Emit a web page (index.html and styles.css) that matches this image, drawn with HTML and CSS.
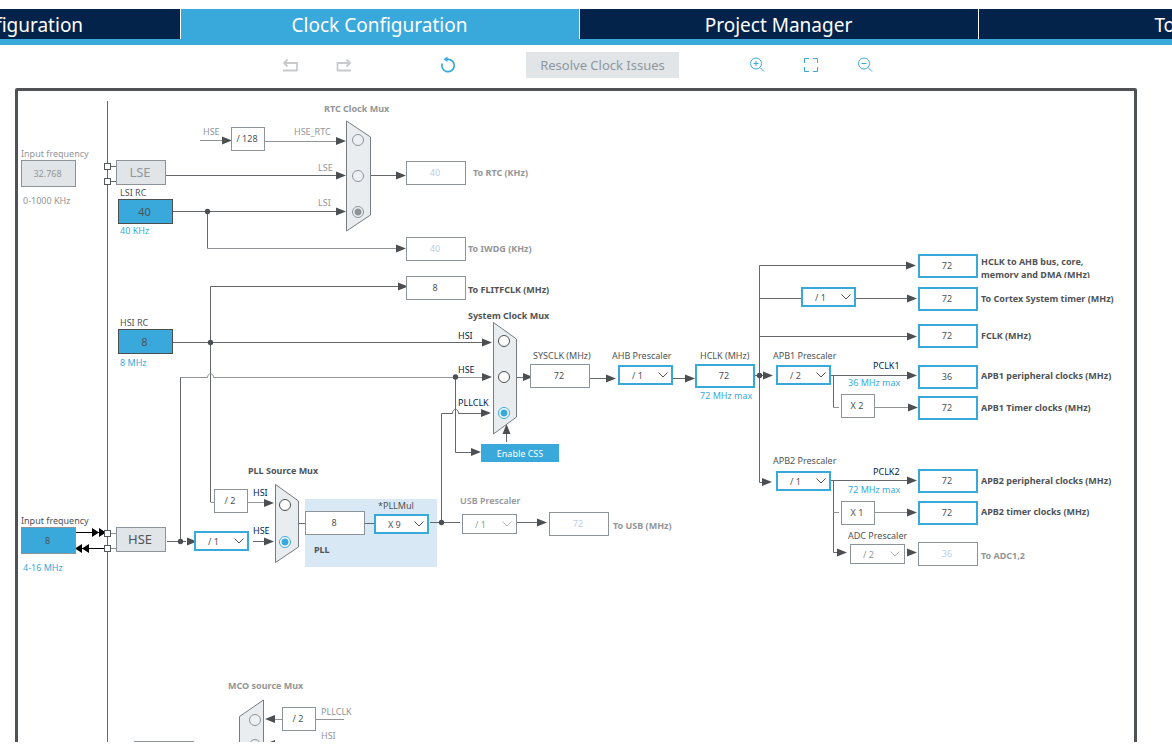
FILE: index.html
```html
<!DOCTYPE html>
<html lang="en">
<head>
<meta charset="utf-8">
<title>Clock Configuration</title>
<link rel="stylesheet" href="styles.css">
</head>
<body>
<nav class="tabs">
  <a class="tab" href="#pinout">Pinout &amp; Configuration</a>
  <a class="tab tab-active" href="#clock">Clock Configuration</a>
  <a class="tab" href="#project">Project Manager</a>
  <a class="tab" href="#tools">Tools</a>
</nav>

<div class="toolbar">
  <div class="tools">
    <button class="tool" aria-label="Undo" disabled><svg viewBox="0 0 20 20"><path class="gray-icon" d="M3 15.500H17M17 16V8H5M7.500 4.500L4 8L7.500 11.500"/></svg></button>
    <button class="tool" aria-label="Redo" disabled><svg viewBox="0 0 20 20"><path class="gray-icon" d="M17 15.500H3M3.500 16V8H15M12.500 4.500L16 8L12.500 11.500"/></svg></button>
  </div>
  <button class="tool tool-reset" aria-label="Reset"><svg viewBox="0 0 20 20"><path class="blue-icon bold-icon" d="M4.200 8.500A6.200 6.200 0 1 0 10 4.300H8"/><path class="blue-fill" d="M5.500 4.300L9.500 1.500V7Z"/></svg></button>
  <button class="resolve" disabled>Resolve Clock Issues</button>
  <div class="tools">
    <button class="tool" aria-label="Zoom in"><svg viewBox="0 0 20 20"><circle class="blue-icon" cx="9" cy="8.500" r="5.500"/><path class="blue-icon" d="M13 12.500L17 16.500M6.500 8.500H11.500M9 6V11"/></svg></button>
    <button class="tool" aria-label="Fit"><svg viewBox="0 0 20 20"><path class="blue-icon" d="M3.500 8V3.500H8M12 3.500H16.500V8M16.500 12V16.500H12M8 16.500H3.500V12"/></svg></button>
    <button class="tool" aria-label="Zoom out"><svg viewBox="0 0 20 20"><circle class="blue-icon" cx="9" cy="8.500" r="5.500"/><path class="blue-icon" d="M13 12.500L17 16.500M6.500 8.500H11.500"/></svg></button>
  </div>
</div>

<main class="diagram">
  <svg class="wires" width="1172" height="680" aria-hidden="true">
    <defs>
      <path id="arrow" class="head" d="M0 0L-10 -4V4Z"/>
      <symbol id="chevron" viewBox="0 0 12 8"><path class="chevron-line" d="M1.500 1.500L6 6L10.500 1.500"/></symbol>
    </defs>
    <rect class="pll-area" x="305" y="419" width="132" height="68"/>

    <g class="wire">
      <path d="M107.500 21V680"/>
      <path d="M110 86.500H116M110 101.500H116"/>
      <path d="M166 95.500H337M370 95.500H397"/>
      <path d="M173 131.500H337M207.500 131.500V168.500"/>
      <path d="M210.500 422V206.500H398M173 262.500H483"/>
      <path d="M180.500 461V297M455.500 297V372.500H472"/>
      <path d="M441.500 442V333.500H452.500C452.500 328 458.500 328 458.500 333.500H483"/>
      <path d="M517 297.500H524M506.500 362V352M590 298.500H607M673 298.500H686M755 295.500H765"/>
      <path d="M759.500 185.500V402.500H763M759.500 185.500H907M759.500 218.500H801M856 218.500H908M759.500 256.500H908"/>
      <path d="M831 295.500H908M833.500 295.500V327.500M831 400.500H907M833.500 400.500V472.500H838"/>
      <path d="M167 461.500H186M253 461.500H265M299 443.500H305M365 443.500H374M430 442.500H460M517 442.500H538"/>
    </g>
    <g class="wire pale">
      <path d="M200 60.500H222M265 61.500H337M207.500 168.500H397"/>
      <path d="M180.500 297.500H207.500C207.500 292.500 213.500 292.500 213.500 297.500H483"/>
      <path d="M210.500 422.500H214M248 422.500H265M833.500 327.500H839M875 327.500H908"/>
      <path d="M833.500 432.500H839M875 432.500H907M274 639.500H282M316 639.500H344"/>
      <path d="M110 453.500H116M110 468.500H116"/>
    </g>
    <g>
      <use href="#arrow" x="232" y="60.500"/><use href="#arrow" x="346" y="61"/>
      <use href="#arrow" x="346" y="95.500"/><use href="#arrow" x="346" y="131.500"/>
      <use href="#arrow" x="406" y="95.500"/><use href="#arrow" x="406" y="168.500"/>
      <use href="#arrow" x="408" y="206.500"/><use href="#arrow" x="492" y="262.500"/>
      <use href="#arrow" x="492" y="297"/><use href="#arrow" x="491" y="333"/>
      <use href="#arrow" x="481" y="372"/><use href="#arrow" x="533" y="297"/>
      <use href="#arrow" x="616" y="298.500"/><use href="#arrow" x="695" y="298.500"/>
      <use href="#arrow" x="773" y="295.500"/><use href="#arrow" x="772" y="402"/>
      <use href="#arrow" x="916" y="185.500"/><use href="#arrow" x="917" y="218.500"/>
      <use href="#arrow" x="917" y="256.500"/><use href="#arrow" x="917" y="295.500"/>
      <use href="#arrow" x="918" y="327.500"/><use href="#arrow" x="917" y="400.500"/>
      <use href="#arrow" x="917" y="432.500"/><use href="#arrow" x="847" y="472.500"/>
      <use href="#arrow" x="917" y="472.500"/><use href="#arrow" x="197" y="461.500"/>
      <use href="#arrow" x="274" y="461.500"/><use href="#arrow" x="274" y="423"/>
      <use href="#arrow" x="547" y="442.500"/>
      <use href="#arrow" transform="translate(506.500 344) rotate(-90)"/>
      <use href="#arrow" transform="translate(265 639) rotate(180)"/>
      <use href="#arrow" transform="translate(265 664) rotate(180)"/>
    </g>
    <g class="dot">
      <circle cx="207.500" cy="131.500" r="2.700"/><circle cx="210.500" cy="262.500" r="2.700"/>
      <circle cx="455.500" cy="297" r="2.700"/><circle cx="759.500" cy="295.500" r="2.700"/>
      <circle cx="180.500" cy="461.500" r="2.700"/><circle cx="441.500" cy="442.500" r="2.700"/>
    </g>
    <path class="crystal" d="M76 452.500H104M76 468.500H104"/>
    <path class="crystal-head" d="M92 448L99 452.500L92 457ZM99 448L106 452.500L99 457ZM82 464L75 468.500L82 473ZM89 464L82 468.500L89 473Z"/>
    <g class="pin">
      <rect x="104.500" y="83.500" width="6" height="6"/><rect x="104.500" y="98.500" width="6" height="6"/>
      <rect x="104.500" y="450.500" width="6" height="6"/><rect x="104.500" y="465.500" width="6" height="6"/>
    </g>
    <g class="mux">
      <path d="M346.500 41L370.500 57V135L346.500 151Z"/>
      <path d="M493.500 242.500L516.500 259V337L493.500 354Z"/>
      <path d="M275.500 404.500L298.500 421V467L275.500 482.500Z"/>
      <path d="M263.500 620L239.500 636.500V690H263.500Z"/>
    </g>
    <g class="fixed">
      <rect x="231.500" y="47.500" width="33" height="23"/><rect x="214.500" y="409.500" width="33" height="23"/>
      <rect x="841.500" y="314.500" width="33" height="23"/><rect x="841.500" y="421.500" width="33" height="23"/>
      <rect x="282.500" y="627.500" width="33" height="23"/><rect x="134.500" y="661.500" width="59" height="23"/>
    </g>
    <g class="text center">
      <text x="247" y="62">/ 128</text><text x="230" y="424">/ 2</text><text x="857" y="329">X 2</text>
      <text x="857" y="436">X 1</text><text x="298" y="642">/ 2</text>
    </g>
    <g class="text">
      <text x="120" y="116">LSI RC</text><text x="120" y="246">HSI RC</text>
    </g>
    <g class="text bold">
      <text x="468" y="239">System Clock Mux</text><text x="248" y="394">PLL Source Mux</text><text x="314" y="473">PLL</text>
    </g>
    <g class="text bold muted">
      <text x="324" y="32">RTC Clock Mux</text><text x="228" y="609">MCO source Mux</text>
    </g>
    <g class="text muted">
      <text x="203" y="55">HSE</text><text x="294" y="55">HSE_RTC</text><text x="318" y="91">LSE</text>
      <text x="318" y="126">LSI</text><text x="23" y="124">0-1000 KHz</text>
      <text x="321" y="635">PLLCLK</text><text x="321" y="659">HSI</text>
    </g>
    <g class="text navy">
      <text x="458" y="259">HSI</text><text x="458" y="293">HSE</text><text x="458" y="326">PLLCLK</text>
      <text x="253" y="416">HSI</text><text x="253" y="454">HSE</text>
      <text x="873" y="289">PCLK1</text><text x="873" y="395">PCLK2</text>
    </g>
    <g class="text blue">
      <text x="120" y="154">40 KHz</text><text x="120" y="286">8 MHz</text><text x="23" y="491">4-16 MHz</text>
      <text x="700" y="319">72 MHz max</text><text x="848" y="306">36 MHz max</text><text x="848" y="413">72 MHz max</text>
    </g>
  </svg>

  <label class="caption muted-label at-lse-cap" for="lse-in">Input frequency</label>
  <input class="value crystal-in at-lse-in" id="lse-in" value="32.768" disabled>
  <button class="source at-lse" disabled>LSE</button>
  <button class="osc at-lsi">40</button>
  <button class="osc at-hsi">8</button>
  <label class="caption at-hse-cap" for="hse-in">Input frequency</label>
  <input class="value crystal-in crystal-on at-hse-in" id="hse-in" value="8">
  <button class="source source-on at-hse">HSE</button>

  <input class="radio at-rtc-hse" type="radio" name="rtc" aria-label="HSE_RTC" disabled>
  <input class="radio at-rtc-lse" type="radio" name="rtc" aria-label="LSE" disabled>
  <input class="radio at-rtc-lsi" type="radio" name="rtc" aria-label="LSI" disabled checked>
  <input class="radio at-sys-hsi" type="radio" name="sys" aria-label="System clock HSI">
  <input class="radio at-sys-hse" type="radio" name="sys" aria-label="System clock HSE">
  <input class="radio at-sys-pll" type="radio" name="sys" aria-label="System clock PLLCLK" checked>
  <input class="radio at-pll-hsi" type="radio" name="pll" aria-label="PLL HSI">
  <input class="radio at-pll-hse" type="radio" name="pll" aria-label="PLL HSE" checked>
  <input class="radio at-mco-pll" type="radio" name="mco" aria-label="MCO PLLCLK" disabled>
  <input class="radio at-mco-hsi" type="radio" name="mco" aria-label="MCO HSI" disabled>

  <input class="value at-rtc" id="rtc" value="40" disabled>
  <label class="caption bold-label muted-label at-rtc-cap" for="rtc">To RTC (KHz)</label>
  <input class="value at-iwdg" id="iwdg" value="40" disabled>
  <label class="caption bold-label muted-label at-iwdg-cap" for="iwdg">To IWDG (KHz)</label>
  <input class="value at-flitf" id="flitf" value="8">
  <label class="caption bold-label at-flitf-cap" for="flitf">To FLITFCLK (MHz)</label>

  <button class="css-button at-css">Enable CSS</button>

  <span class="drop drop-on at-hsediv"><select aria-label="HSE divider"><option>/ 1</option></select><svg><use href="#chevron"/></svg></span>
  <input class="value at-pll" aria-label="PLL input" value="8">
  <label class="caption at-mul-cap" for="mul">*PLLMul</label>
  <span class="drop drop-on at-mul"><select id="mul"><option>X 9</option></select><svg><use href="#chevron"/></svg></span>

  <label class="caption semi-label muted-label at-usbdiv-cap" for="usbdiv">USB Prescaler</label>
  <span class="drop drop-off at-usbdiv"><select id="usbdiv" disabled><option>/ 1</option></select><svg><use href="#chevron"/></svg></span>
  <input class="value at-usb" id="usb" value="72" disabled>
  <label class="caption bold-label muted-label at-usb-cap" for="usb">To USB (MHz)</label>

  <label class="caption at-sysclk-cap" for="sysclk">SYSCLK (MHz)</label>
  <input class="value at-sysclk" id="sysclk" value="72">
  <label class="caption at-ahb-cap" for="ahb">AHB Prescaler</label>
  <span class="drop drop-on at-ahb"><select id="ahb"><option>/ 1</option></select><svg><use href="#chevron"/></svg></span>
  <label class="caption at-hclk-cap" for="hclk">HCLK (MHz)</label>
  <input class="value value-on at-hclk" id="hclk" value="72">

  <span class="drop drop-on at-cortexdiv"><select aria-label="Cortex timer prescaler"><option>/ 1</option></select><svg><use href="#chevron"/></svg></span>
  <label class="caption at-apb1-cap" for="apb1">APB1 Prescaler</label>
  <span class="drop drop-on at-apb1"><select id="apb1"><option>/ 2</option></select><svg><use href="#chevron"/></svg></span>
  <label class="caption at-apb2-cap" for="apb2">APB2 Prescaler</label>
  <span class="drop drop-on at-apb2"><select id="apb2"><option>/ 1</option></select><svg><use href="#chevron"/></svg></span>
  <label class="caption at-adcdiv-cap" for="adcdiv">ADC Prescaler</label>
  <span class="drop drop-off at-adcdiv"><select id="adcdiv" disabled><option>/ 2</option></select><svg><use href="#chevron"/></svg></span>

  <input class="value value-on at-o1" id="o1" value="72">
  <label class="caption bold-label two-line at-c1" for="o1">HCLK to AHB bus, core,<br>memory and DMA (MHz)</label>
  <input class="value value-on at-o2" id="o2" value="72">
  <label class="caption bold-label at-c2" for="o2">To Cortex System timer (MHz)</label>
  <input class="value value-on at-o3" id="o3" value="72">
  <label class="caption bold-label at-c3" for="o3">FCLK (MHz)</label>
  <input class="value value-on at-o4" id="o4" value="36">
  <label class="caption bold-label at-c4" for="o4">APB1 peripheral clocks (MHz)</label>
  <input class="value value-on at-o5" id="o5" value="72">
  <label class="caption bold-label at-c5" for="o5">APB1 Timer clocks (MHz)</label>
  <input class="value value-on at-o6" id="o6" value="72">
  <label class="caption bold-label at-c6" for="o6">APB2 peripheral clocks (MHz)</label>
  <input class="value value-on at-o7" id="o7" value="72">
  <label class="caption bold-label at-c7" for="o7">APB2 timer clocks (MHz)</label>
  <input class="value at-o8" id="o8" value="36" disabled>
  <label class="caption bold-label muted-label at-c8" for="o8">To ADC1,2</label>
</main>
</body>
</html>
```
FILE: styles.css
```css
:root {
  --navy: #03234b;
  --blue: #39a9dc;
  --ink: #4f5356;
  --muted: #939699;
  --edge: #8c9499;
  --panel: #e1e5e8;
}

* { box-sizing: border-box; }

body {
  margin: 0;
  height: 100vh;
  display: flex;
  flex-direction: column;
  overflow: hidden;
  background: #fff;
  color: var(--ink);
  font-family: "Noto Sans", sans-serif;
  font-size: 9px;
}

button, input, select { font: inherit; color: inherit; margin: 0; padding: 0; }

/* Tab strip */
.tabs {
  display: flex;
  justify-content: center;
  gap: 1px;
  margin-top: 9px;
  padding-right: 14px;
  border-bottom: 6px solid var(--blue);
  overflow: hidden;
}

.tab {
  flex: 0 0 398px;
  height: 30px;
  line-height: 32px;
  background: var(--navy);
  color: #fff;
  font-size: 19px;
  text-align: center;
  text-decoration: none;
}

.tab-active { background: var(--blue); }

/* Toolbar */
.toolbar {
  display: flex;
  justify-content: center;
  align-items: center;
  gap: 68px;
  padding: 7px 17px 2px 0;
}

.tools { display: flex; gap: 34px; }
.tool { width: 20px; height: 20px; border: 0; background: none; }
.tool svg { display: block; width: 20px; height: 20px; }
.tool-reset { margin-left: 16px; }
.gray-icon { fill: none; stroke: #c8cacc; stroke-width: 1.8; }
.blue-icon { fill: none; stroke: var(--blue); stroke-width: 1; }
.bold-icon { stroke-width: 1.7; }
.blue-fill { fill: var(--blue); }

.resolve {
  height: 26px;
  width: 153px;
  border: 0;
  background: var(--panel);
  color: #8f979e;
  font-size: 13px;
}

/* Clock tree canvas */
.diagram {
  position: relative;
  flex: 1;
  margin-bottom: 9px;
  overflow: hidden;
}

.diagram::before {
  content: "";
  position: absolute;
  inset: 8px 35px -9px 15px;
  border: 3px solid #4f5356;
  border-radius: 2px;
}

.wires { position: absolute; left: 0; top: 0; }
.wire { fill: none; stroke: #65686a; stroke-width: 1; }
.pale { stroke: #909496; }
.head, .dot { fill: #4b4f52; }
.crystal { stroke: #000; }
.crystal-head { fill: #000; }
.pin { fill: #fff; stroke: #55585a; }
.mux { fill: #e9edf0; stroke: #767c81; }
.fixed { fill: #fff; stroke: var(--edge); }
.pll-area { fill: #d9e8f5; }
.chevron-line { fill: none; stroke: currentColor; stroke-width: 1; }
.text { fill: var(--ink); }
.center { text-anchor: middle; }
.bold { font-weight: 700; }
.muted { fill: var(--muted); }
.navy { fill: var(--navy); }
.blue { fill: var(--blue); }

.caption { position: absolute; line-height: 12px; white-space: nowrap; }
.bold-label { font-weight: 700; }
.semi-label { font-weight: 600; }
.muted-label { color: var(--muted); }
.two-line { line-height: 13px; height: 23px; overflow: hidden; }

.value {
  position: absolute;
  width: 60px;
  height: 24px;
  padding: 0 2px 1px 0;
  border: 1px solid var(--edge);
  border-radius: 0;
  background: #fff;
  text-align: center;
}

.value:disabled { color: #b9cfe6; }
.value-on { border: 2px solid var(--blue); }

.crystal-in { width: 55px; height: 27px; background: var(--panel); }
.crystal-in:disabled { color: var(--muted); }
.crystal-on { background: var(--blue); }

.source {
  position: absolute;
  width: 50px;
  height: 25px;
  padding: 0 2px 2px 0;
  border: 1px solid var(--edge);
  background: var(--panel);
  color: #8f979e;
  font-size: 13px;
}

.source-on { color: var(--ink); }

.osc {
  position: absolute;
  width: 55px;
  height: 25px;
  padding: 0 2px 1px 0;
  border: 1px solid #4b4f52;
  background: var(--blue);
  font-size: 11px;
}

.css-button {
  position: absolute;
  width: 78px;
  height: 18px;
  border: 0;
  background: var(--blue);
  color: #fff;
}

.drop { position: absolute; width: 55px; height: 20px; background: #fff; }

.drop select {
  appearance: none;
  width: 100%;
  height: 100%;
  padding-left: 12px;
  border: 1px solid var(--edge);
  border-radius: 0;
  background: none;
  opacity: 1;
}

.drop-on select { border: 2px solid var(--blue); }
.drop-off { color: #b4b8ba; }
.drop-off select { color: var(--muted); }

.drop svg {
  position: absolute;
  right: 4px;
  top: 6px;
  width: 12px;
  height: 8px;
  pointer-events: none;
}

.radio {
  appearance: none;
  position: absolute;
  width: 12px;
  height: 12px;
  border: 1px solid #4b4f52;
  border-radius: 50%;
  background: #fff;
}

.radio:checked {
  border-color: var(--blue);
  background: radial-gradient(circle, var(--blue) 3px, #fff 4px);
}

.radio:disabled { border-color: var(--edge); background: #eef1f3; }
.radio:checked:disabled { background: radial-gradient(circle, var(--edge) 3px, #eef1f3 4px); }

/* Node places on the canvas */
.at-lse-cap { left: 21px; top: 68px; }
.at-lse-in { left: 21px; top: 80px; }
.at-lse { left: 116px; top: 80px; }
.at-lsi { left: 118px; top: 119px; }
.at-hsi { left: 118px; top: 249px; }
.at-hse-cap { left: 21px; top: 435px; }
.at-hse-in { left: 21px; top: 447px; }
.at-hse { left: 116px; top: 447px; }
.at-rtc-hse { left: 352px; top: 54px; }
.at-rtc-lse { left: 352px; top: 90px; }
.at-rtc-lsi { left: 352px; top: 126px; }
.at-sys-hsi { left: 498px; top: 255px; }
.at-sys-hse { left: 498px; top: 291px; }
.at-sys-pll { left: 498px; top: 327px; }
.at-pll-hsi { left: 279px; top: 419px; }
.at-pll-hse { left: 279px; top: 456px; }
.at-mco-pll { left: 249px; top: 634px; }
.at-mco-hsi { left: 249px; top: 659px; }
.at-rtc { left: 406px; top: 81px; }
.at-rtc-cap { left: 473px; top: 87px; }
.at-iwdg { left: 406px; top: 157px; }
.at-iwdg-cap { left: 468px; top: 163px; }
.at-flitf { left: 406px; top: 196px; }
.at-flitf-cap { left: 468px; top: 204px; }
.at-css { left: 481px; top: 364px; }
.at-hsediv { left: 194px; top: 451px; }
.at-pll { left: 305px; top: 431px; }
.at-mul-cap { left: 378px; top: 420px; }
.at-mul { left: 374px; top: 434px; }
.at-usbdiv-cap { left: 460px; top: 415px; }
.at-usbdiv { left: 462px; top: 434px; }
.at-usb { left: 549px; top: 432px; }
.at-usb-cap { left: 613px; top: 440px; }
.at-sysclk-cap { left: 533px; top: 270px; }
.at-sysclk { left: 530px; top: 284px; }
.at-ahb-cap { left: 612px; top: 270px; }
.at-ahb { left: 618px; top: 285px; }
.at-hclk-cap { left: 700px; top: 270px; }
.at-hclk { left: 695px; top: 284px; }
.at-cortexdiv { left: 801px; top: 207px; }
.at-apb1-cap { left: 773px; top: 270px; }
.at-apb1 { left: 776px; top: 285px; }
.at-apb2-cap { left: 773px; top: 375px; }
.at-apb2 { left: 776px; top: 391px; }
.at-adcdiv-cap { left: 848px; top: 450px; }
.at-adcdiv { left: 850px; top: 464px; }
.at-o1 { left: 918px; top: 174px; }
.at-o2 { left: 918px; top: 207px; }
.at-o3 { left: 918px; top: 244px; }
.at-o4 { left: 918px; top: 285px; }
.at-o5 { left: 918px; top: 316px; }
.at-o6 { left: 918px; top: 389px; }
.at-o7 { left: 918px; top: 421px; }
.at-o8 { left: 918px; top: 462px; }
.at-c1 { left: 981px; top: 175px; }
.at-c2 { left: 981px; top: 213px; }
.at-c3 { left: 981px; top: 250px; }
.at-c4 { left: 981px; top: 290px; }
.at-c5 { left: 981px; top: 322px; }
.at-c6 { left: 981px; top: 395px; }
.at-c7 { left: 981px; top: 426px; }
.at-c8 { left: 981px; top: 470px; }
```
